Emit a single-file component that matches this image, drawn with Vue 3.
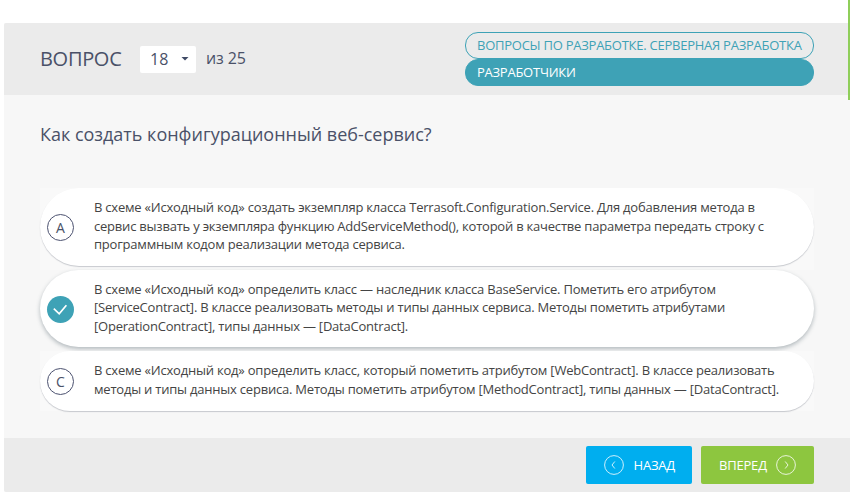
<script setup>
const tags = [
  { text: 'ВОПРОСЫ ПО РАЗРАБОТКЕ. СЕРВЕРНАЯ РАЗРАБОТКА', filled: false },
  { text: 'РАЗРАБОТЧИКИ', filled: true }
]
const options = [
  {
    letter: 'A',
    selected: false,
    lines: [
      'В схеме «Исходный код» создать экземпляр класса Terrasoft.Configuration.Service. Для добавления метода в',
      'сервис вызвать у экземпляра функцию AddServiceMethod(), которой в качестве параметра передать строку с',
      'программным кодом реализации метода сервиса.'
    ]
  },
  {
    letter: 'B',
    selected: true,
    lines: [
      'В схеме «Исходный код» определить класс — наследник класса BaseService. Пометить его атрибутом',
      '[ServiceContract]. В классе реализовать методы и типы данных сервиса. Методы пометить атрибутами',
      '[OperationContract], типы данных — [DataContract].'
    ]
  },
  {
    letter: 'C',
    selected: false,
    lines: [
      'В схеме «Исходный код» определить класс, который пометить атрибутом [WebContract]. В классе реализовать',
      'методы и типы данных сервиса. Методы пометить атрибутом [MethodContract], типы данных — [DataContract].'
    ]
  }
]
</script>

<template>
  <div class="page">
    <div class="edge"></div>
    <main class="panel">
      <header class="head">
        <span class="title">ВОПРОС</span>
        <button class="select">
          <span>18</span>
          <svg width="8" height="4" viewBox="0 0 8 4"><path d="M0.5 0H7.5L4 3.6Z" fill="#3f4a66" /></svg>
        </button>
        <span class="total">из 25</span>
        <div class="tags">
          <span v-for="t in tags" :key="t.text" class="tag" :class="{ filled: t.filled }">{{ t.text }}</span>
        </div>
      </header>

      <section class="body">
        <h1 class="question">Как создать конфигурационный веб-сервис?</h1>
        <div class="options">
          <div v-for="o in options" :key="o.letter" class="wrap" :class="{ selected: o.selected }">
            <div class="option">
              <span class="mark">
                <svg v-if="o.selected" width="27" height="27" viewBox="0 0 27 27" fill="none">
                  <path d="M6.8 12.7L12.2 17.8L19.4 9.2" stroke="#fff" stroke-width="1.7" />
                </svg>
                <template v-else>{{ o.letter }}</template>
              </span>
              <div class="text">
                <div v-for="l in o.lines" :key="l">{{ l }}</div>
              </div>
            </div>
          </div>
        </div>
      </section>

      <footer class="foot">
        <button class="btn back">
          <svg width="20" height="20" viewBox="0 0 20 20" fill="none" stroke="#fff">
            <circle cx="10" cy="10" r="9.4" stroke-opacity="0.8" />
            <path d="M10.8 6.5L8 10L10.8 13.5" stroke-opacity="0.8" />
          </svg>
          <span>НАЗАД</span>
        </button>
        <button class="btn next">
          <span>ВПЕРЕД</span>
          <svg width="20" height="20" viewBox="0 0 20 20" fill="none" stroke="#fff">
            <circle cx="10" cy="10" r="9.4" stroke-opacity="0.8" />
            <path d="M9.2 6.5L12 10L9.2 13.5" stroke-opacity="0.8" />
          </svg>
        </button>
      </footer>
    </main>
  </div>
</template>

<style>
body {
  margin: 0;
  background: #fff;
  overflow: hidden;
}
</style>

<style scoped>
.page {
  position: relative;
  box-sizing: border-box;
  width: 850px;
  height: 495px;
  padding: 23px 0 3px 4px;
  background: #fff;
  font-family: "Open Sans", "Noto Sans", sans-serif;
  color: #4a5168;
  overflow: hidden;
}
.edge {
  position: absolute;
  top: 0;
  right: 0;
  width: 2px;
  height: 100px;
  background: #8fce5a;
}
.panel {
  height: 469px;
  display: flex;
  flex-direction: column;
  background: #f7f7f7;
  border-radius: 2px 0 0 2px;
  overflow: hidden;
}
button {
  border: 0;
  margin: 0;
  font-family: inherit;
  color: inherit;
}
.head {
  box-sizing: border-box;
  height: 72px;
  padding: 0 36px;
  display: flex;
  align-items: center;
  background: #ebebeb;
  white-space: nowrap;
}
.title {
  width: 100px;
  font-size: 20px;
  line-height: 28px;
  letter-spacing: -0.3px;
}
.select {
  box-sizing: border-box;
  width: 56px;
  height: 27px;
  padding: 0 7px 0 10px;
  display: flex;
  align-items: center;
  justify-content: space-between;
  background: #fff;
  border-radius: 2px;
  font-size: 16px;
  line-height: 24px;
}
.select span {
  margin-top: -1px;
}
.total {
  margin: -2px 0 0 10px;
  font-size: 16px;
  letter-spacing: -0.1px;
}
.tags {
  width: 349px;
  margin-left: auto;
  display: flex;
  flex-direction: column;
}
.tag {
  box-sizing: border-box;
  height: 27px;
  padding: 0 11px;
  border: 1px solid #3ea2b6;
  border-radius: 13px;
  font-size: 13px;
  line-height: 25px;
  letter-spacing: -0.25px;
  color: #3ea2b6;
}
.filled {
  background: #3ea2b6;
  color: #fff;
}
.body {
  height: 343px;
  box-sizing: border-box;
  padding: 26px 36px 0;
}
.question {
  margin: 0;
  font-size: 18px;
  line-height: 26px;
  font-weight: 400;
  letter-spacing: -0.01px;
}
.options {
  margin-top: 41px;
}
.wrap {
  padding-bottom: 4px;
  background: #f9f9f9;
}
.wrap.selected {
  background: #f7f7f7;
}
.wrap:last-child {
  padding-bottom: 0;
}
.option {
  display: flex;
  align-items: center;
  padding: 11px 7px;
  background: #fff;
  border-radius: 39px;
  box-shadow: 0 1px 1px rgba(50, 60, 80, 0.25);
}
.selected .option {
  box-shadow: 0 2px 4px rgba(50, 70, 80, 0.35);
}
.mark {
  box-sizing: border-box;
  flex: none;
  width: 27px;
  height: 27px;
  margin: 1px 20px 0 0;
  display: flex;
  align-items: center;
  justify-content: center;
  border: 1px solid #4c5270;
  border-radius: 50%;
  font-size: 14px;
  line-height: 25px;
}
.selected .mark {
  border: 0;
  background: #3ea2b6;
}
.text {
  margin: -1px 0 1px;
  color: #444;
  font-size: 13px;
  line-height: 18.57px;
  letter-spacing: -0.215px;
  white-space: nowrap;
}
.foot {
  box-sizing: border-box;
  height: 54px;
  padding: 8px 36px;
  display: flex;
  justify-content: flex-end;
  gap: 9px;
  background: #ebebeb;
}
.btn {
  box-sizing: border-box;
  height: 38px;
  display: flex;
  align-items: center;
  justify-content: space-between;
  border-radius: 2px;
  color: #fff;
  font-size: 13px;
  letter-spacing: -0.2px;
  white-space: nowrap;
}
.back {
  width: 106px;
  padding: 0 17px 0 18px;
  background: #00aeef;
}
.next {
  width: 113px;
  padding: 0 18px;
  background: #8dc63f;
}
</style>
